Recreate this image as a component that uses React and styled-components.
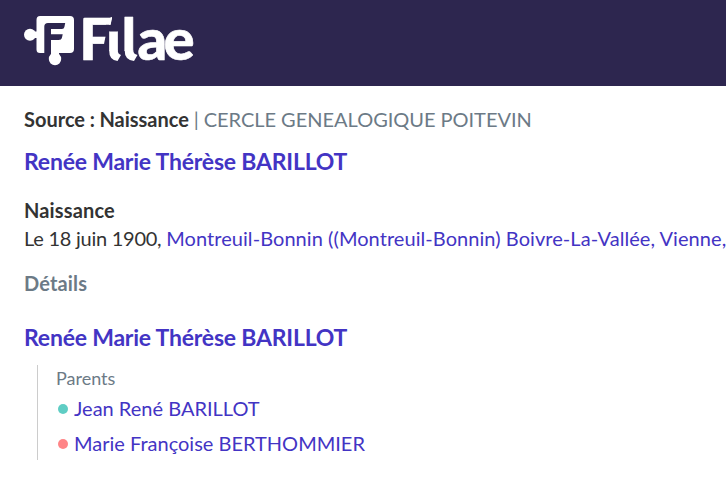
import React from 'react'
import styled, { createGlobalStyle } from 'styled-components'

const GlobalStyle = createGlobalStyle`
  body {
    margin: 0;
    background: #fff;
    color: #333;
    font-family: Lato, "Open Sans", sans-serif;
    font-size: 20px;
    overflow: hidden;
  }
`

const Header = styled.header`
  height: 86px;
  background: #2d264f;
`

const Logo = styled.svg`
  display: block;
  width: 220px;
  height: 86px;
  fill: #fff;
`

const Wordmark = styled.text`
  font-family: Lato, sans-serif;
  font-weight: 900;
  font-size: 58px;
  stroke: #fff;
  stroke-width: 0.6px;
  stroke-linejoin: round;
`

const Content = styled.main`
  padding: 21px 0 0 24px;
`

const Source = styled.div`
  line-height: 24px;
  white-space: nowrap;
  color: #6c7a86;
  word-spacing: -0.25px;

  b {
    color: #333;
  }
`

const Name = styled.h1`
  margin: 0;
  padding-top: ${props => props.$space};
  font-size: 23px;
  line-height: 28px;
  font-weight: 700;
  letter-spacing: -0.21px;
  color: #4334c4;
`

const Heading = styled.h2`
  margin: 0;
  padding-top: ${props => props.$space};
  font-size: 20px;
  line-height: 28px;
  font-weight: 700;
  letter-spacing: 0.15px;
  color: ${props => props.$muted ? '#6c7a86' : '#333'};
`

const Event = styled.p`
  margin: 0;
  line-height: 28px;
  white-space: nowrap;
`

const EventDate = styled.span`
  letter-spacing: -0.26px;
`

const Link = styled.a`
  color: #4334c4;
`

const Place = styled(Link)`
  letter-spacing: 0.06px;
`

const Family = styled.section`
  margin: 14px 0 0 13px;
  padding-left: 18px;
  height: 95px;
  border-left: 1px solid #ccc;
`

const Label = styled.div`
  font-size: 18px;
  line-height: 26px;
  color: #6c7a86;
`

const Parent = styled.div`
  display: flex;
  align-items: center;
  height: 35px;

  a {
    margin-top: -2px;
  }
`

const Dot = styled.span`
  width: 10px;
  height: 10px;
  margin: 0 6px 0 2px;
  border-radius: 50%;
  background: ${props => props.$color};
`

function App() {
  return (
    <>
      <GlobalStyle />
      <Header>
        <Logo viewBox="0 0 220 86" role="img" aria-label="Filae">
          <defs>
            {/* leaves the i without its dot and makes room for the tails */}
            <clipPath id="wordmark">
              <path d="M83 20Q83 16.5 87 16.5H112V19L110.5 24.7H106V34L104 44H100V62H83Z" />
              <path d="M108.5 31.5H118V51H108.5ZM122 14H136V51H122ZM137.5 14H220V70H137.5Z" />
            </clipPath>
          </defs>
          {/* puzzle piece, open along the stem */}
          <path d="M40 16H70Q74 16 74 20V49Q74 53 70 53H59V58H51V40H58.5Q61.5 40 62 37.5L62.7 34.3H51V29H62Q64 29 64.4 27L65.2 23H48Q44.3 23 44.3 26.5V53H40Q36.5 53 36.5 49.5V38H32V31.5H36.5V20Q36.5 16 40 16Z" />
          <circle cx="30" cy="34.7" r="6" />
          <circle cx="55" cy="59" r="6.2" />
          <g clipPath="url(#wordmark)">
            <Wordmark x="79.3 106 121.5 137.5 163.5" y="59.5">Filae</Wordmark>
          </g>
          {/* tails of the i and the l */}
          <path d="M109.2 50.5Q109 60 117.5 61L121 55Q117.8 54 117.8 50.5ZM124.7 50.5Q124.5 60 134 61L137.5 55Q133.3 54 133.3 50.5Z" />
        </Logo>
      </Header>
      <Content>
        <Source><b>Source : Naissance</b> | CERCLE GENEALOGIQUE POITEVIN</Source>
        <Name $space="16px">Renée Marie Thérèse BARILLOT</Name>
        <Heading $space="21px">Naissance</Heading>
        <Event>
          <EventDate>Le 18 juin 1900, </EventDate>
          <Place>Montreuil-Bonnin ((Montreuil-Bonnin) Boivre-La-Vallée, Vienne,</Place>
        </Event>
        <Heading $space="17px" $muted>Détails</Heading>
        <Name $space="26px">Renée Marie Thérèse BARILLOT</Name>
        <Family>
          <Label>Parents</Label>
          <Parent><Dot $color="#5fcdc4" /><Link>Jean René BARILLOT</Link></Parent>
          <Parent><Dot $color="#ff8587" /><Link>Marie Françoise BERTHOMMIER</Link></Parent>
        </Family>
      </Content>
    </>
  )
}

export default App
